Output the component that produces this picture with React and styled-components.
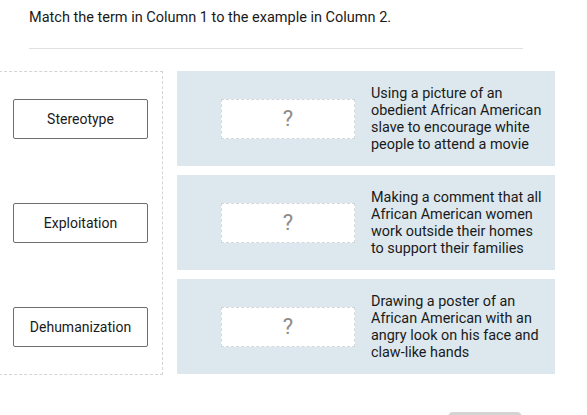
import React from "react";
import styled, { createGlobalStyle } from "styled-components";

const Global = createGlobalStyle`
  html, body { margin: 0; padding: 0; background: #fff; }
  body { font-family: Roboto, "Liberation Sans", Arial, sans-serif; color: #1f1f1f; }
  * { box-sizing: border-box; }
`;

const Page = styled.div`
  width: 587px;
  height: 415px;
  overflow: hidden;
  display: flex;
  flex-direction: column;
  & > * { flex-shrink: 0; }
`;

const Header = styled.div`
  margin: 0 64px 0 29px;
  padding-top: 9px;
  height: 49px;
  border-bottom: 1px solid #e0e0e0;
`;

const Prompt = styled.p`
  margin: 0;
  font-size: 14.5px;
  line-height: 18px;
  color: #1a1a1a;
`;

const Board = styled.div`
  display: flex;
  align-items: flex-start;
  gap: 14px;
  margin-top: 22px;
`;

const TermColumn = styled.div`
  width: 164px;
  height: 304px;
  margin-left: -1px;
  border: 1px dashed #d4d4d4;
  display: grid;
  grid-template-rows: repeat(3, 1fr);
  row-gap: 9px;
  padding-left: 13px;
`;

const TermSlot = styled.div`
  display: flex;
  align-items: center;
`;

const Term = styled.div`
  width: 135px;
  height: 40px;
  border: 1px solid #6e6e6e;
  border-radius: 2px;
  display: flex;
  align-items: center;
  justify-content: center;
  font-size: 14px;
  color: #1a1a1a;
  background: #fff;
`;

const ExampleColumn = styled.div`
  display: flex;
  flex-direction: column;
  gap: 9px;
`;

const Row = styled.div`
  width: 378px;
  height: 95px;
  background: #dce8ee;
  display: flex;
  align-items: center;
  padding-left: 44px;
  gap: 15px;
`;

const Drop = styled.div`
  width: 134px;
  height: 40px;
  background: #fff;
  border: 1px dashed #d2d9dd;
  display: flex;
  align-items: center;
  justify-content: center;
  font-size: 22px;
  color: #8c8c8c;
  font-weight: 400;
`;

const Example = styled.div`
  width: 176px;
  padding-left: 1px;
  font-size: 14.4px;
  line-height: 17px;
  color: #1a1a1a;
`;

const Footer = styled.div`
  display: flex;
  justify-content: flex-end;
  margin: 37px 65px 0 0;
`;

const Submit = styled.div`
  width: 74px;
  height: 30px;
  background: #d4d4d4;
  border-radius: 5px;
`;

const terms = ["Stereotype", "Exploitation", "Dehumanization"];
const examples = [
  "Using a picture of an obedient African American slave to encourage white people to attend a movie",
  "Making a comment that all African American women work outside their homes to support their families",
  "Drawing a poster of an African American with an angry look on his face and claw-like hands",
];

export default function App() {
  return (
    <Page>
      <Global />
      <Header>
        <Prompt>Match the term in Column 1 to the example in Column 2.</Prompt>
      </Header>
      <Board>
        <TermColumn>
          {terms.map((t) => (
            <TermSlot key={t}>
              <Term>{t}</Term>
            </TermSlot>
          ))}
        </TermColumn>
        <ExampleColumn>
          {examples.map((e) => (
            <Row key={e}>
              <Drop>?</Drop>
              <Example>{e}</Example>
            </Row>
          ))}
        </ExampleColumn>
      </Board>
      <Footer>
        <Submit />
      </Footer>
    </Page>
  );
}
